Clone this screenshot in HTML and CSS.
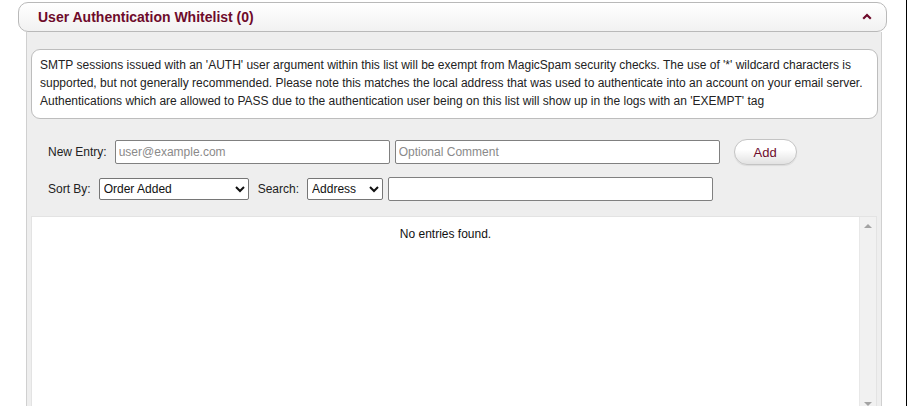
FILE: index.html
```html
<!DOCTYPE html>
<html lang="en">
<head>
  <meta charset="UTF-8" />
  <title>User Authentication Whitelist</title>
  <link rel="stylesheet" href="styles.css">
</head>
<body>

<div class="page">
  <div class="section-head">
    <h2>User Authentication Whitelist (0)</h2>
    <svg class="toggle" width="10" height="7" viewBox="0 0 10 7">
      <polyline points="1.2,5.8 5,2 8.8,5.8" fill="none" stroke="#6e0b2b" stroke-width="2.2"/>
    </svg>
  </div>

  <div class="section-body">
    <p class="note">SMTP sessions issued with an 'AUTH' user argument within this list will be exempt from MagicSpam security checks. The use of '*' wildcard characters is supported, but not generally recommended. Please note this matches the local address that was used to authenticate into an account on your email server. Authentications which are allowed to PASS due to the authentication user being on this list will show up in the logs with an 'EXEMPT' tag</p>

    <form class="entry-row">
      <label for="newEntry">New Entry:</label>
      <input type="text" id="newEntry" class="entry-addr" placeholder="user@example.com">
      <input type="text" class="entry-comment" placeholder="Optional Comment">
      <button type="button" class="add-btn">Add</button>
    </form>

    <div class="filter-row">
      <label for="sortBy">Sort By:</label>
      <select id="sortBy" class="sort-select">
        <option>Order Added</option>
        <option>Address</option>
        <option>Comment</option>
      </select>
      <label for="searchIn" class="search-label">Search:</label>
      <select id="searchIn" class="search-select">
        <option>Address</option>
        <option>Comment</option>
      </select>
      <input type="text" class="search-box">
    </div>

    <div class="list">
      <div class="list-content">No entries found.</div>
      <div class="scrollbar">
        <span class="arrow up"></span>
        <span class="arrow down"></span>
      </div>
    </div>
  </div>
</div>

</body>
</html>
```

FILE: styles.css
```css
html, body {
  margin: 0;
  overflow: hidden;
  background: #fff;
}

body {
  font-family: "Liberation Sans", Arial, sans-serif;
  font-size: 12px;
  color: #222;
}

.page {
  width: 907px;
  height: 406px;
  border-right: 1px solid #000;
  padding-top: 2px;
  box-sizing: border-box;
}

/* header bar */
.section-head {
  margin-left: 18px;
  width: 869px;
  height: 30px;
  box-sizing: border-box;
  border: 1px solid #b9b9b9;
  border-radius: 10px;
  background: linear-gradient(#ffffff, #f1f1f1);
  display: flex;
  align-items: center;
  justify-content: space-between;
  padding: 0 14px 0 19px;
}

.section-head h2 {
  margin: 0;
  font-size: 14px;
  font-weight: bold;
  color: #6e0b2b;
  line-height: 28px;
}

.toggle {
  display: block;
  margin-top: -2px;
}

/* grey panel */
.section-body {
  margin-left: 26px;
  width: 856px;
  height: 380px;
  box-sizing: border-box;
  background: #eeeeee;
  border-left: 1px solid #d0d0d0;
  border-right: 1px solid #d0d0d0;
  padding-top: 17px;
}

.note {
  margin: 0 3px 0 4px;
  background: #fff;
  border: 1px solid #bdbdbd;
  border-radius: 9px;
  padding: 6px 8px 8px;
  line-height: 18px;
  color: #222;
}

.entry-row, .filter-row {
  display: flex;
  align-items: center;
  padding-left: 21px;
  margin: 0;
}

.entry-row {
  margin-top: 20px;
  height: 26px;
}

.filter-row {
  margin-top: 12px;
  height: 24px;
}

label {
  color: #222;
}

input[type="text"] {
  height: 24px;
  box-sizing: border-box;
  border: 1px solid #808080;
  border-radius: 2px;
  padding: 0 3px;
  font-family: "Liberation Sans", Arial, sans-serif;
  font-size: 12px;
  color: #222;
  background: #fff;
}

input::placeholder {
  color: #8a8a8a;
}

.entry-addr {
  margin-left: 8px;
  width: 275px;
}

.entry-comment {
  margin-left: 5px;
  width: 325px;
}

.add-btn {
  margin-left: 14px;
  width: 63px;
  height: 26px;
  border: 1px solid #c4c4c4;
  border-radius: 13px;
  background: linear-gradient(#ffffff 40%, #e2e2e2);
  box-shadow: 0 1px 1px rgba(0,0,0,0.08);
  color: #6e0b2b;
  font-family: "Liberation Sans", Arial, sans-serif;
  font-size: 13px;
  cursor: pointer;
}

select {
  height: 22px;
  box-sizing: border-box;
  border: 1px solid #767676;
  border-radius: 2px;
  background: #fff;
  font-family: "Liberation Sans", Arial, sans-serif;
  font-size: 12px;
  color: #111;
}

.sort-select {
  margin-left: 8px;
  width: 150px;
}

.search-label {
  margin-left: 9px;
}

.search-select {
  margin-left: 8px;
  width: 76px;
}

.search-box {
  margin-left: 5px;
  width: 325px;
}

/* entries list */
.list {
  margin: 15px 4px 0 4px;
  height: 190px;
  background: #fff;
  border: 1px solid #e3e3e3;
  display: flex;
}

.list-content {
  flex: 1;
  text-align: center;
  line-height: 14px;
  padding-top: 10px;
  color: #111;
}

.scrollbar {
  width: 16px;
  background: #f1f1f1;
  border-left: 1px solid #e8e8e8;
  display: flex;
  flex-direction: column;
  align-items: center;
  justify-content: space-between;
  padding: 7px 0 1px;
}

.arrow {
  width: 0;
  height: 0;
  border-left: 4px solid transparent;
  border-right: 4px solid transparent;
}

.arrow.up {
  border-bottom: 4px solid #a3a3a3;
}

.arrow.down {
  border-top: 4px solid #a3a3a3;
}
```
